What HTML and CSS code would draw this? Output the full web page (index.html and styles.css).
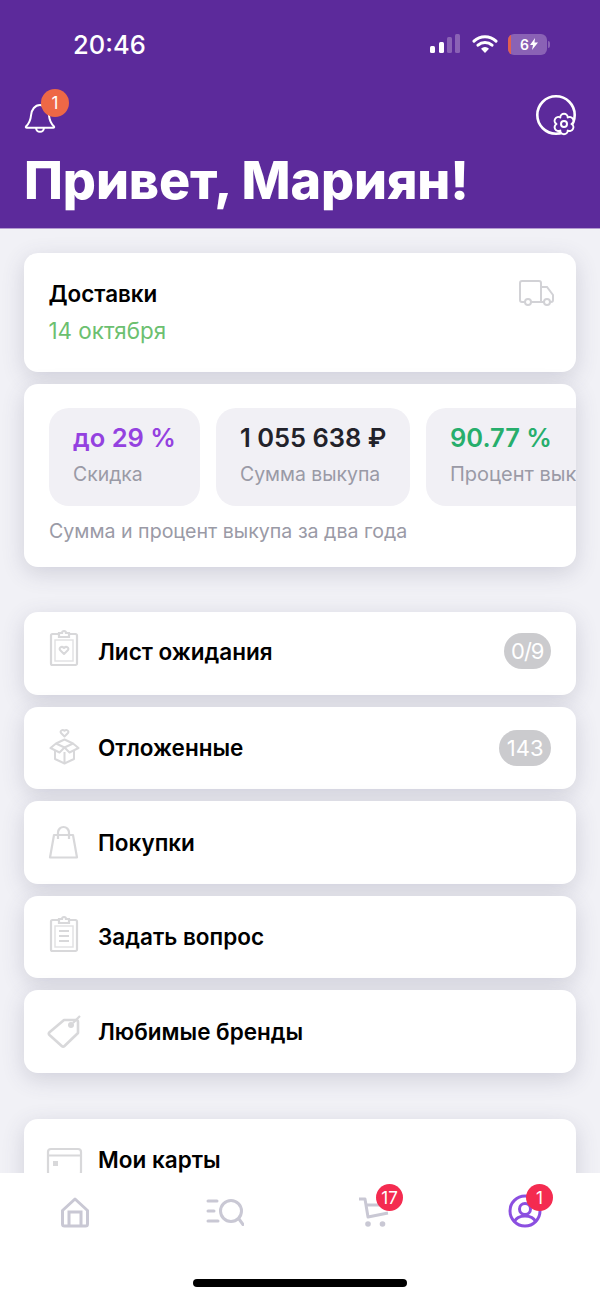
FILE: index.html
```html
<!DOCTYPE html>
<html lang="ru">
<head>
<meta charset="utf-8">
<title>Профиль</title>
<link rel="stylesheet" href="styles.css">
</head>
<body>
<div class="screen">
  <header class="hero">
    <div class="status">
      <span class="time">20:46</span>
      <div class="status-icons">
        <svg class="signal" width="30" height="20" viewBox="0 0 30 20"><rect x="0" y="12" width="5" height="7" rx="1.500" fill="#fff"/><rect x="9" y="8" width="5" height="11" rx="1.500" fill="#fff"/><rect x="17" y="3" width="5" height="16" rx="1.500" fill="#8a62b5"/><rect x="25" y="0" width="5" height="19" rx="1.500" fill="#8a62b5"/></svg>
        <svg class="wifi" width="26" height="20" viewBox="0 0 26 20"><path d="M2 7.200a16 16 0 0 1 22 0M6 11.200a10.500 10.500 0 0 1 14 0" fill="none" stroke="#fff" stroke-width="3" stroke-linecap="round"/><path d="M13 19l-4-4.300a5.800 5.800 0 0 1 8 0z" fill="#fff"/></svg>
        <div class="battery"><span class="battery-low"></span><span class="battery-text">6<svg width="8" height="12" viewBox="0 0 8 12"><path d="M5 0L0 7h3l-1 5 6-7.500H4.500z" fill="#fff"/></svg></span></div>
        <span class="battery-cap"></span>
      </div>
    </div>
    <div class="actions">
      <div class="bell">
        <svg width="32" height="34" viewBox="0 0 32 34"><path d="M2 27.500c3-3 4.500-5 5-11 .5-6 4-10.500 9-10.500s8.500 4.500 9 10.500c.5 6 2 8 5 11 .5.700 0 1.300-.8 1.300H2.800c-.8 0-1.300-.6-.8-1.300zM12 29c.3 2.500 2 3.800 4 3.800s3.700-1.300 4-3.800" fill="none" stroke="#fff" stroke-width="2" stroke-linejoin="round"/></svg>
        <span class="bell-badge">1</span>
      </div>
      <svg class="profile-gear" width="42" height="42" viewBox="0 0 42 42"><circle cx="21" cy="20" r="18.700" fill="none" stroke="#fff" stroke-width="2.600"/><path d="M36.500 29A3.750 3.750 0 0 1 32.750 35.500A3.750 3.750 0 0 1 25.250 35.500A3.750 3.750 0 0 1 21.500 29A3.750 3.750 0 0 1 25.250 22.500A3.750 3.750 0 0 1 32.750 22.500A3.750 3.750 0 0 1 36.500 29z" fill="#5c2a9b" stroke="#fff" stroke-width="2" stroke-linejoin="round"/><circle cx="29" cy="29" r="3" fill="none" stroke="#fff" stroke-width="2"/></svg>
    </div>
    <h1>Привет, Мариян!</h1>
  </header>

  <main class="content">
    <section class="card delivery">
      <div>
        <div class="delivery-title">Доставки</div>
        <div class="delivery-date">14 октября</div>
      </div>
      <svg width="36" height="26" viewBox="0 0 36 26"><path d="M6 22H3a2 2 0 0 1-2-2V3a2 2 0 0 1 2-2h17a2 2 0 0 1 2 2v19H12M22 7h6l6 8v5a2 2 0 0 1-2 2h-1M25 22h-3" fill="none" stroke="#d2d2d6" stroke-width="2"/><circle cx="9" cy="22" r="3" fill="none" stroke="#d2d2d6" stroke-width="2"/><circle cx="28" cy="22" r="3" fill="none" stroke="#d2d2d6" stroke-width="2"/></svg>
    </section>

    <section class="card stats">
      <div class="tiles">
        <div class="tile tile-discount"><div class="tile-value purple">до 29 %</div><div class="tile-label">Скидка</div></div>
        <div class="tile tile-sum"><div class="tile-value">1 055 638 ₽</div><div class="tile-label">Сумма выкупа</div></div>
        <div class="tile tile-percent"><div class="tile-value green">90.77 %</div><div class="tile-label">Процент выкупа</div></div>
      </div>
      <p class="stats-note">Сумма и процент выкупа за два года</p>
    </section>

    <nav class="group">
      <div class="card row row-raised">
        <svg class="row-icon" width="36" height="38" viewBox="0 3 36 38"><path d="M10 5H3.500A1.500 1.500 0 0 0 2 6.500v28A1.500 1.500 0 0 0 3.500 36h23a1.500 1.500 0 0 0 1.500-1.500v-28A1.500 1.500 0 0 0 26.500 5H20" fill="none" stroke="#d8d8da" stroke-width="2.200"/><path d="M10 8V4h3a2 2 0 0 1 4 0h3v4z" fill="none" stroke="#d8d8da" stroke-width="2.200"/><rect x="6" y="11" width="18" height="21" fill="none" stroke="#e2e2e4" stroke-width="1.500"/><path d="M15 25l-4-4c-1.500-2 1.500-4.500 4-2 2.500-2.500 5.500 0 4 2z" fill="none" stroke="#d8d8da" stroke-width="2" stroke-linejoin="round"/></svg>
        <span class="row-title">Лист ожидания</span>
        <span class="pill pill-tight">0/9</span>
      </div>
      <div class="card row">
        <svg class="row-icon" width="36" height="38" viewBox="0 3 36 38"><path d="M15.500 10.500l-3.500-3.500c-1.500-2 1.500-4 3.500-2.200 2-1.800 5 .2 3.500 2.200z" fill="none" stroke="#d8d8da" stroke-width="2" stroke-linejoin="round"/><path d="M7 17.500l8.500-4 8.500 4-8.500 4zM7 17.500l-5.500 4.500 9 4.500 5-5 5 5 9-4.500-5.500-4.500M6 25v8l9.500 4.500 9.500-4.500v-8M15.500 26v11" fill="none" stroke="#d8d8da" stroke-width="2" stroke-linejoin="round"/></svg>
        <span class="row-title">Отложенные</span>
        <span class="pill">143</span>
      </div>
      <div class="card row">
        <svg class="row-icon" width="36" height="38" viewBox="0 0 36 38"><path d="M5 12h19l4 22.500H1z" fill="none" stroke="#d8d8da" stroke-width="2.200" stroke-linejoin="round"/><path d="M9 16V9.500a5.500 5.500 0 0 1 11 0V16" fill="none" stroke="#d8d8da" stroke-width="2.200"/></svg>
        <span class="row-title">Покупки</span>
      </div>
      <div class="card row">
        <svg class="row-icon" width="36" height="38" viewBox="0 3 36 38"><path d="M10 5H3.500A1.500 1.500 0 0 0 2 6.500v28A1.500 1.500 0 0 0 3.500 36h23a1.500 1.500 0 0 0 1.500-1.500v-28A1.500 1.500 0 0 0 26.500 5H20" fill="none" stroke="#d8d8da" stroke-width="2.200"/><path d="M10 8V4h3a2 2 0 0 1 4 0h3v4z" fill="none" stroke="#d8d8da" stroke-width="2.200"/><rect x="6" y="11" width="18" height="21" fill="none" stroke="#e2e2e4" stroke-width="1.500"/><path d="M10 16h10M10 21h10M10 26h10" stroke="#d8d8da" stroke-width="2"/></svg>
        <span class="row-title">Задать вопрос</span>
      </div>
      <div class="card row">
        <svg class="row-icon" width="36" height="38" viewBox="0 0 36 38"><path d="M15 8h12a2 2 0 0 1 2 2v11L15.500 34a2 2 0 0 1-2.800 0L.5 23a2 2 0 0 1 0-2.800z" fill="none" stroke="#d8d8da" stroke-width="2.600" stroke-linejoin="round"/><circle cx="22" cy="13" r="3" fill="#d8d8da"/><path d="M24 11l7-7" stroke="#d8d8da" stroke-width="2.200"/></svg>
        <span class="row-title">Любимые бренды</span>
      </div>
    </nav>

    <div class="card row">
      <svg class="row-icon" width="36" height="38" viewBox="0 0 36 38"><rect x="-1" y="8" width="33" height="26" rx="3" fill="none" stroke="#d8d8da" stroke-width="2.200"/><path d="M-1 14.500h33" stroke="#d8d8da" stroke-width="2.200"/><rect x="4" y="20" width="5" height="5" fill="#d8d8da"/></svg>
      <span class="row-title">Мои карты</span>
    </div>
  </main>

  <footer class="tabbar">
    <div class="tabs">
      <div class="tab">
        <svg width="30" height="32" viewBox="0 0 30 32"><path d="M2.500 13.500L15 2l12.500 11.500V27a2 2 0 0 1-2 2h-21a2 2 0 0 1-2-2z" fill="none" stroke="#c9c8d4" stroke-width="3" stroke-linejoin="round"/><path d="M9 29V15h12v14" fill="none" stroke="#c9c8d4" stroke-width="3"/></svg>
      </div>
      <div class="tab">
        <svg width="38" height="30" viewBox="0 0 38 30"><path d="M2 4h9M2 14h6M2 24h10" stroke="#c9c8d4" stroke-width="3" stroke-linecap="round"/><circle cx="25" cy="14" r="10.500" fill="none" stroke="#c9c8d4" stroke-width="3"/><path d="M33 22l4 5.500" stroke="#c9c8d4" stroke-width="3" stroke-linecap="round"/></svg>
      </div>
      <div class="tab">
        <svg width="34" height="32" viewBox="0 0 34 32"><path d="M1 2h6l3 18 20-4" fill="none" stroke="#c9c8d4" stroke-width="3" stroke-linejoin="round"/><path d="M8 8h24" stroke="#c9c8d4" stroke-width="3"/><circle cx="10" cy="27" r="2.800" fill="#c9c8d4"/><circle cx="24.500" cy="27" r="2.800" fill="#c9c8d4"/></svg>
        <span class="tab-badge badge-cart">17</span>
      </div>
      <div class="tab tab-user">
        <svg width="34" height="34" viewBox="0 0 34 34"><circle cx="17" cy="17" r="15" fill="none" stroke="#8b4fe0" stroke-width="3"/><circle cx="17" cy="15" r="5.500" fill="none" stroke="#8b4fe0" stroke-width="3"/><path d="M6 28c2-4 6-6 11-6s9 2 11 6" fill="none" stroke="#8b4fe0" stroke-width="3"/></svg>
        <span class="tab-badge badge-user">1</span>
      </div>
    </div>
    <div class="home-bar"></div>
  </footer>
</div>
</body>
</html>
```

FILE: styles.css
```css
* { box-sizing: border-box; }
html, body { margin: 0; padding: 0; }
body {
  width: 600px;
  height: 1300px;
  overflow: hidden;
  font-family: Inter, "Noto Sans", sans-serif;
  background: #f1f1f6;
}
.screen { width: 600px; height: 1300px; display: flex; flex-direction: column; overflow: hidden; }

.hero {
  flex: none;
  height: 229px;
  background: #5c2a9b;
  color: #fff;
  padding: 28px 24px 0;
  border-bottom: 1px solid #b49ad0;
}
.status { display: flex; justify-content: space-between; align-items: center; height: 32px; padding-left: 49px; padding-right: 26px; }
.time { font-size: 25.500px; font-weight: 500; }
.status-icons { display: flex; align-items: center; }
.signal { margin-right: 12px; }
.wifi { margin-right: 10px; }
.battery { position: relative; width: 39px; height: 21px; border-radius: 6px; background: #8a62b5; overflow: hidden; display: flex; align-items: center; justify-content: center; }
.battery-low { width: 3px; height: 21px; background: #e2604f; flex: none; position: absolute; left: 0; top: 0; }
.battery-text { font-size: 14px; font-weight: 600; display: flex; align-items: center; gap: 1px; padding-left: 3px; }
.battery-cap { width: 2px; height: 7px; background: #8a62b5; border-radius: 0 2px 2px 0; margin-left: 1px; }

.actions { display: flex; justify-content: space-between; align-items: flex-start; margin-top: 29px; }
.bell { position: relative; width: 32px; height: 44px; padding-top: 10px; }
.bell-badge {
  position: absolute; left: 17px; top: 0;
  width: 28px; height: 28px; border-radius: 50%;
  background: #ee6846; color: #fff;
  font-size: 17px; display: flex; align-items: center; justify-content: center;
}
.profile-gear { margin-top: 6px; margin-right: -1px; overflow: visible; }

h1 { margin: 12px 0 0; font-size: 52px; line-height: 64px; font-weight: 800; letter-spacing: -.1px; white-space: nowrap; color: #fff; }

.content { flex: 1; min-height: 0; overflow: hidden; padding: 24px 24px 0; display: flex; flex-direction: column; }
.card { background: #fff; border-radius: 14px; box-shadow: 0 6px 22px rgba(70, 70, 100, .19); flex: none; }

.delivery { height: 119px; padding: 27px 21px 0 24.500px; display: flex; justify-content: space-between; align-items: flex-start; }
.delivery-title { font-size: 22.400px; line-height: 28px; font-weight: 600; color: #000; }
.delivery-date { font-size: 22.400px; line-height: 28px; color: #6cc070; margin-top: 9px; }

.stats { margin-top: 12px; height: 183px; padding: 24px 0 0 25px; overflow: hidden; }
.tiles { display: flex; gap: 16px; }
.tile { flex: none; height: 98px; border-radius: 20px; background: #f1f0f5; padding: 15px 0 0 24px; white-space: nowrap; overflow: hidden; }
.tile-discount { width: 151px; }
.tile-sum { width: 194px; }
.tile-percent { width: 200px; }
.tile-percent .tile-label { font-size: 20px; }
.tile-value { font-size: 25.500px; line-height: 30px; font-weight: 600; color: #22222a; }
.purple { color: #9441e0; }
.green { color: #27ae6c; }
.tile-label { font-size: 19.400px; line-height: 26px; color: #9a9aa6; margin-top: 8px; }
.stats-note { margin: 12px 0 0; font-size: 19.600px; line-height: 26px; color: #9a9aa6; }

.group { margin-top: 45px; margin-bottom: 46px; display: flex; flex-direction: column; gap: 12px; }
.row { height: 82.500px; padding: 0 25px; display: flex; align-items: center; }
.row-raised { padding-bottom: 4px; }
.row-icon { flex: none; margin-right: 13px; overflow: visible; }
.row-title { font-size: 22.500px; font-weight: 600; color: #000; flex: 1; }
.pill { min-width: 47px; height: 36px; padding: 0 7.500px; border-radius: 18px; background: #cbcbce; color: #fff; font-size: 22px; display: flex; align-items: center; justify-content: center; }
.pill-tight { letter-spacing: -1px; }

.tabbar { flex: none; height: 127px; background: #fff; position: relative; z-index: 1; }
.tabs { display: grid; grid-template-columns: repeat(4, 150px); height: 80px; padding-top: 24px; }
.tab { position: relative; display: flex; justify-content: center; align-items: flex-start; }
.tab-user svg { margin-top: -3px; }
.tab-badge {
  position: absolute; top: -13px;
  width: 27px; height: 27px; border-radius: 50%;
  background: #f42b50; color: #fff;
  font-size: 17px; display: flex; align-items: center; justify-content: center;
}
.badge-cart { left: 76px; }
.badge-user { left: 76px; }
.home-bar { width: 214px; height: 8px; border-radius: 4px; background: #000; margin: 26px auto 0; }
```
